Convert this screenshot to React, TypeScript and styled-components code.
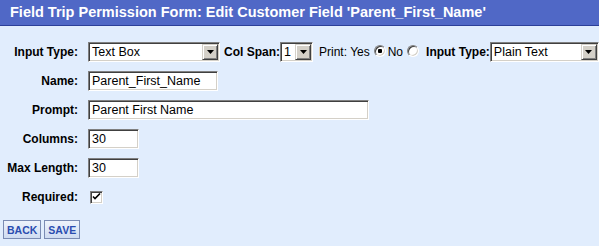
import React from 'react';
import styled, { createGlobalStyle } from 'styled-components';

const GlobalStyle = createGlobalStyle`
    html, body {
        margin: 0;
        padding: 0;
        background: #e1edfd;
        font-family: "Liberation Sans", Arial, sans-serif;
        color: #000;
    }
`;

const Page = styled.div`
    width: 599px;
    height: 246px;
    overflow: hidden;
    background: #e1edfd;
`;

const Header = styled.div`
    height: 25px;
    line-height: 25px;
    padding-left: 10px;
    background: #5068c6;
    border-bottom: 1px solid #2c3f98;
    color: #fff;
    font-size: 14.5px;
    font-weight: bold;
    white-space: nowrap;
`;

const Form = styled.div`
    display: grid;
    grid-template-columns: 75px auto;
    grid-auto-rows: 20px;
    column-gap: 10px;
    row-gap: 9px;
    align-items: center;
    padding: 16px 3px 0;
`;

const Label = styled.label`
    text-align: right;
    font-size: 12px;
    font-weight: bold;
    white-space: nowrap;
`;

const InlineLabel = styled.span<{ $bold?: boolean; $gap?: number }>`
    font-size: 12px;
    font-weight: ${(p) => (p.$bold ? 'bold' : 'normal')};
    margin-left: ${(p) => p.$gap ?? 0}px;
    white-space: nowrap;
`;

const FieldRow = styled.div`
    display: flex;
    align-items: center;
`;

const sunken = `
    border: 1px solid;
    border-color: #808080 #ffffff #ffffff #808080;
    box-shadow: inset 1px 1px 0 #404040, inset -1px -1px 0 #d4d0c8;
`;

const TextInput = styled.input<{ $width: number }>`
    ${sunken}
    box-sizing: border-box;
    width: ${(p) => p.$width}px;
    height: 20px;
    padding: 0 3px;
    margin: 0;
    background: #fff;
    font-family: "Liberation Sans", Arial, sans-serif;
    font-size: 12.5px;
    color: #000;
    outline: none;
`;

const SelectBox = styled.span<{ $width: number }>`
    ${sunken}
    box-sizing: border-box;
    display: inline-flex;
    flex: none;
    width: ${(p) => p.$width}px;
    height: 20px;
    padding: 1px;
    background: #fff;
`;

const NativeSelect = styled.select`
    appearance: none;
    flex: 1;
    min-width: 0;
    border: none;
    margin: 0;
    padding: 0 0 0 2px;
    background: transparent;
    font-family: "Liberation Sans", Arial, sans-serif;
    font-size: 12.5px;
    color: #000;
    outline: none;
`;

const ArrowButton = styled.span`
    box-sizing: border-box;
    width: 16px;
    height: 16px;
    flex: none;
    display: flex;
    align-items: center;
    justify-content: center;
    background: #d4d0c8;
    border: 1px solid;
    border-color: #d4d0c8 #404040 #404040 #d4d0c8;
    box-shadow: inset 1px 1px 0 #fff, inset -1px -1px 0 #808080;
`;

const Radio = styled.input`
    appearance: none;
    box-sizing: border-box;
    flex: none;
    width: 12px;
    height: 12px;
    margin: 0 2px 3px 4px;
    border-radius: 50%;
    border: 1px solid;
    border-color: #808080 #ffffff #ffffff #808080;
    box-shadow: inset 1px 1px 0 #404040, inset -1px -1px 0 #d4d0c8;
    background: #fff;

    &:checked {
        background: radial-gradient(circle, #000 0 2px, #fff 2.5px);
    }
`;

const CheckBox = styled.span`
    ${sunken}
    box-sizing: border-box;
    width: 13px;
    height: 13px;
    margin-left: 2px;
    display: flex;
    align-items: center;
    justify-content: center;
    background: #fff;
`;

const Buttons = styled.div`
    display: flex;
    gap: 3px;
    padding: 13px 3px 0;
`;

const Button = styled.button`
    box-sizing: border-box;
    height: 19px;
    padding: 0 3px;
    margin: 0;
    border: 1px solid #7a8bb3;
    background: linear-gradient(#eef3fc, #cfdcf1);
    color: #2a4db0;
    font-family: "Liberation Sans", Arial, sans-serif;
    font-size: 10.5px;
    font-weight: bold;
    cursor: pointer;
`;

function Arrow() {
    return (
        <ArrowButton>
            <svg width="7" height="4" viewBox="0 0 7 4">
                <path d="M0 0h7L3.5 4z" fill="#000" />
            </svg>
        </ArrowButton>
    );
}

function Select({ width, options }: { width: number; options: string[] }) {
    return (
        <SelectBox $width={width}>
            <NativeSelect defaultValue={options[0]}>
                {options.map((o) => (
                    <option key={o}>{o}</option>
                ))}
            </NativeSelect>
            <Arrow />
        </SelectBox>
    );
}

export default function App() {
    return (
        <Page>
            <GlobalStyle />
            <Header>
                Field Trip Permission Form: Edit Customer Field
                'Parent_First_Name'
            </Header>

            <Form>
                <Label>Input Type:</Label>
                <FieldRow>
                    <Select width={132} options={['Text Box', 'Text Area', 'Check Box']} />
                    <InlineLabel $bold $gap={4}>Col Span:</InlineLabel>
                    <Select width={33} options={['1', '2', '3']} />
                    <InlineLabel $gap={6}>Print: Yes</InlineLabel>
                    <Radio type="radio" name="print" defaultChecked />
                    <InlineLabel>No</InlineLabel>
                    <Radio type="radio" name="print" />
                    <InlineLabel $bold $gap={5}>Input Type:</InlineLabel>
                    <Select width={109} options={['Plain Text', 'Number', 'Date']} />
                </FieldRow>

                <Label>Name:</Label>
                <FieldRow>
                    <TextInput $width={130} defaultValue="Parent_First_Name" />
                </FieldRow>

                <Label>Prompt:</Label>
                <FieldRow>
                    <TextInput $width={281} defaultValue="Parent First Name" />
                </FieldRow>

                <Label>Columns:</Label>
                <FieldRow>
                    <TextInput $width={51} defaultValue="30" />
                </FieldRow>

                <Label>Max Length:</Label>
                <FieldRow>
                    <TextInput $width={51} defaultValue="30" />
                </FieldRow>

                <Label>Required:</Label>
                <FieldRow>
                    <CheckBox>
                        <svg width="9" height="8" viewBox="0 0 9 8">
                            <path d="M1 3.5l2 2L8 0.5" stroke="#000" strokeWidth="1.6" fill="none" />
                        </svg>
                    </CheckBox>
                </FieldRow>
            </Form>

            <Buttons>
                <Button>BACK</Button>
                <Button>SAVE</Button>
            </Buttons>
        </Page>
    );
}
